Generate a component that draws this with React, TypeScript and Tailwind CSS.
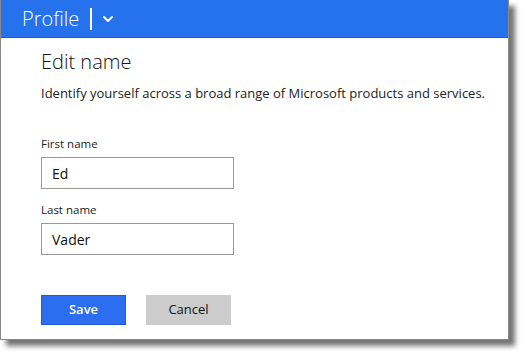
import { ChevronDown } from 'lucide-react';

export default function App() {
  return (
    <div className="w-[525px] h-[356px] bg-white" style={{ fontFamily: '"Open Sans", "Noto Sans", sans-serif' }}>
      <div className="w-[509px] h-[340px] bg-white border-l border-r border-b border-[#8a8a8a] shadow-[6px_6px_5px_rgba(0,0,0,0.55)] flex flex-col">
        {/* header bar */}
        <div className="h-[38px] bg-[#2672ec] border-b border-[#1c5fc8] flex items-center pl-[21px]">
          <span className="text-white text-[20px] font-light leading-none">Profile</span>
          <div className="w-[1.5px] h-[22px] bg-white ml-[11px] mr-[8px]" />
          <ChevronDown className="text-white w-[16px] h-[16px]" strokeWidth={2.75} />
        </div>

        <div className="pl-[40px] pt-[10px]">
          <h1 className="text-[20px] font-light text-[#111] leading-[28px]">Edit name</h1>
          <p className="text-[13px] text-[#222] mt-[8px] leading-[18px]">
            Identify yourself across a broad range of Microsoft products and services.
          </p>

          <div className="mt-[34px]">
            <label className="block text-[11.5px] text-[#222] leading-[16px]">First name</label>
            <div className="mt-[5px] w-[193px] h-[32px] border border-[#999] flex items-center px-[10px] text-[14px] text-[#111]">Ed</div>
          </div>

          <div className="mt-[13px]">
            <label className="block text-[11.5px] text-[#222] leading-[16px]">Last name</label>
            <div className="mt-[5px] w-[193px] h-[32px] border border-[#999] flex items-center px-[10px] text-[14px] text-[#111]">Vader</div>
          </div>

          <div className="mt-[40px] flex gap-[20px]">
            <button className="w-[85px] h-[30px] bg-[#2b6ff0] border border-[#2559d6] text-white text-[13px] font-semibold">Save</button>
            <button className="w-[85px] h-[30px] bg-[#cccccc] text-[#111] text-[13px]">Cancel</button>
          </div>
        </div>
      </div>
    </div>
  );
}
